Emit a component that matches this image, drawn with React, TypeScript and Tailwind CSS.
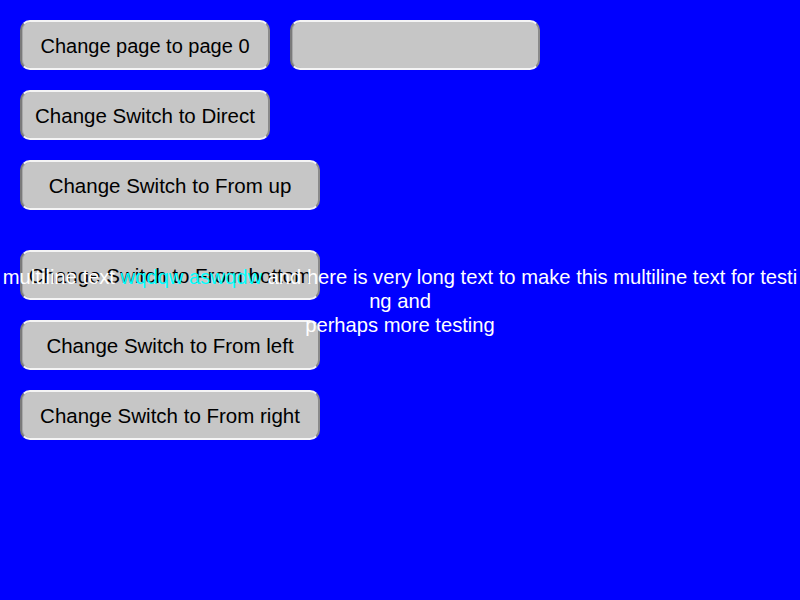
import React from "react";

const btn =
  "flex items-center justify-center h-[50px] pt-[2px] rounded-[10px] bg-[#c6c6c6] text-[20.5px] text-black border-2 border-t-[#f4f4f4] border-b-[#f4f4f4] border-l-[#7a7a7a] border-r-[#8a8a8a] shadow-[inset_1px_0_0_#a8a8a8]";

export default function App() {
  return (
    <div
      className="relative w-[800px] h-[600px] bg-[#0000ff] overflow-hidden"
      style={{ fontFamily: '"Liberation Sans", Arial, sans-serif' }}
    >
      <div className="flex flex-col pl-[20px] pt-[20px]">
        <div className="flex gap-[20px]">
          <div className={`${btn} w-[250px] text-[20px]`}>Change page to page 0</div>
          <div className={`${btn} w-[250px]`}></div>
        </div>
        <div className={`${btn} w-[250px] mt-[20px]`}>Change Switch to Direct</div>
        <div className={`${btn} w-[300px] mt-[20px]`}>Change Switch to From up</div>
        <div className={`${btn} w-[300px] mt-[40px]`}>Change Switch to From bottom</div>
        <div className={`${btn} w-[300px] mt-[20px]`}>Change Switch to From left</div>
        <div className={`${btn} w-[300px] mt-[20px]`}>Change Switch to From right</div>
      </div>
      <div className="absolute left-0 top-[265px] w-[800px] text-center text-white text-[20.2px] leading-[24px] whitespace-pre">
        <div>
          multiline text <span className="text-[#00ffff]">wqdqw aswqdw</span> and here is very long text to make this multiline text for testi
        </div>
        <div>ng and</div>
        <div>perhaps more testing</div>
      </div>
    </div>
  );
}
